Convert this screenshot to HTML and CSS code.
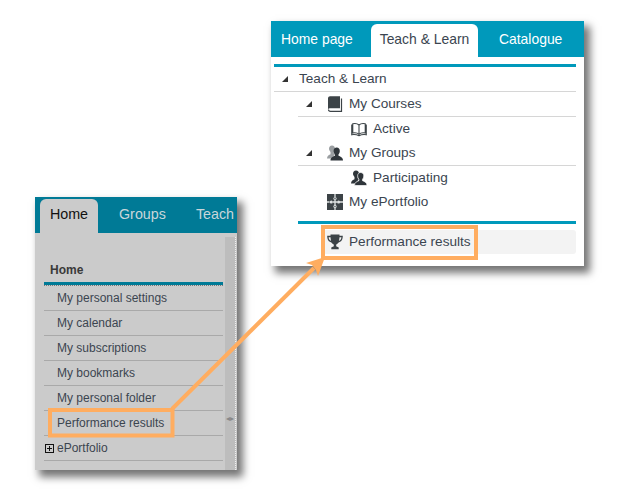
FILE: index.html
```html
<!DOCTYPE html>
<html lang="en">
<head>
<meta charset="utf-8">
<title>Performance results</title>
<link rel="stylesheet" href="styles.css">
</head>
<body>
<svg width="0" height="0" class="defs">
  <defs>
    <symbol id="people" viewBox="0 0 16 15">
      <path d="M5 0c2 0 3 1.500 3 3.300 0 1.400-.6 2.500-1.200 3.200v1.200L8 8.500 5 13H0c0-2.600 2.300-3.600 3.500-4.200V6.500C2.900 5.800 2 4.700 2 3.300 2 1.500 3 0 5 0z" fill="#9a9ea1"/>
      <path d="M9.700 2c2 0 3.100 1.500 3.100 3.400 0 1.500-.6 2.700-1.300 3.400v1.400c1.600.8 4.500 1.300 4.500 4.800H3.500c0-3.500 2.800-4 4.400-4.800V8.800c-.7-.7-1.300-1.900-1.300-3.400C6.600 3.500 7.700 2 9.700 2z" fill="#2f353a"/>
    </symbol>
    <symbol id="people-dark" viewBox="0 0 16 15">
      <path d="M5 0c2 0 3 1.500 3 3.300 0 1.400-.6 2.500-1.200 3.200v1.200L8 8.500 5 13H0c0-2.600 2.300-3.600 3.500-4.200V6.500C2.900 5.800 2 4.700 2 3.300 2 1.500 3 0 5 0z" fill="#2f353a"/>
      <path d="M9.700 2c2 0 3.100 1.500 3.100 3.400 0 1.500-.6 2.700-1.300 3.400v1.400c1.600.8 4.500 1.300 4.500 4.800H3.500c0-3.500 2.800-4 4.400-4.800V8.800c-.7-.7-1.300-1.900-1.300-3.400C6.600 3.500 7.700 2 9.700 2z" fill="#2f353a" stroke="#fff" stroke-width=".7"/>
    </symbol>
  </defs>
</svg>

<section class="window window-small">
  <nav class="tabs tabs-small">
    <span class="tab tab-active">Home</span>
    <span class="tab">Groups</span>
    <span class="tab">Teach</span>
  </nav>
  <div class="small-body">
    <div class="small-menu">
      <h2 class="small-title">Home</h2>
      <ul class="small-list">
        <li class="small-row">My personal settings</li>
        <li class="small-row">My calendar</li>
        <li class="small-row">My subscriptions</li>
        <li class="small-row">My bookmarks</li>
        <li class="small-row">My personal folder</li>
        <li class="small-row">Performance results</li>
        <li class="small-row small-row-tree"><span class="plus"></span>ePortfolio</li>
      </ul>
    </div>
    <div class="splitter"><span class="grip">◂▸</span></div>
  </div>
</section>

<section class="window window-large">
  <nav class="tabs tabs-large">
    <span class="tab tab-first">Home page</span>
    <span class="tab tab-active">Teach &amp; Learn</span>
    <span class="tab">Catalogue</span>
  </nav>
  <div class="tree">
    <div class="tree-row tree-root ruled"><span class="caret"></span><span>Teach &amp; Learn</span></div>
    <div class="tree-row level-1 ruled">
      <span class="caret"></span>
      <svg class="icon" viewBox="0 0 16 16">
        <path d="M1 2.200C1 1 2 .2 3 .2h10v12H3.300c-1 0-1.500.2-2.300.8z" fill="#3c4347"/>
        <path d="M1.500 13.500c0 1 .8 1.800 2 1.800h11V2.500" fill="none" stroke="#3c4347" stroke-width="1.200"/>
      </svg>
      <span>My Courses</span>
    </div>
    <div class="tree-row level-2">
      <svg class="icon" viewBox="0 0 18 16"><path d="M9 3.500C7.500 2 4.500 1.500 2 2v10.500c2.500-.4 5.500 0 7 1.500 1.500-1.500 4.500-1.900 7-1.500V2c-2.500-.5-5.500 0-7 1.500zm0 0V14M2 3.500H.8v11c3-.5 6 0 8.200 1 2.200-1 5.200-1.500 8.200-1v-11H16" fill="none" stroke="#3c4347" stroke-width="1.200"/></svg>
      <span>Active</span>
    </div>
    <div class="tree-row level-1 ruled">
      <span class="caret"></span>
      <svg class="icon"><use href="#people"/></svg>
      <span>My Groups</span>
    </div>
    <div class="tree-row level-2">
      <svg class="icon"><use href="#people-dark"/></svg>
      <span>Participating</span>
    </div>
    <div class="tree-row level-1">
      <span class="caret caret-none"></span>
      <svg class="icon" viewBox="0 0 16 16">
        <rect width="16" height="16" fill="#3c4347"/>
        <path d="M8 0v3M8 6v5M8 14v2M0 8h2.500M6 8h4M13 8h3" fill="none" stroke="#dfe3e4" stroke-width="1.300"/>
        <circle cx="8" cy="4.500" r="1.600" fill="#dfe3e4"/>
        <circle cx="4.300" cy="8" r="1.600" fill="#dfe3e4"/>
        <circle cx="11.600" cy="8" r="1.600" fill="#dfe3e4"/>
        <circle cx="8" cy="12.400" r="1.600" fill="#dfe3e4"/>
        <circle cx="8" cy="4.500" r=".7" fill="#3c4347"/>
        <circle cx="8" cy="12.400" r=".7" fill="#3c4347"/>
      </svg>
      <span>My ePortfolio</span>
    </div>
    <div class="tree-divider"></div>
    <div class="tree-row tree-current">
      <svg class="icon" viewBox="0 0 16 16"><path d="M3.500.5h9v1.300h3.300c0 3.300-1 6-4.200 6.700-.8 1.100-1.700 1.700-2.400 2V12c0 .8 1.600.9 2.500 1.500v1.700H4.300v-1.700c.9-.6 2.500-.7 2.500-1.500v-1.500c-.7-.3-1.600-.9-2.400-2C1.200 7.800.2 5.100.2 1.800h3.300zM1.600 3.200c.1 1.700.8 3 2.500 3.700-.3-1.100-.5-2.400-.6-3.700zm12.800 0h-1.900c-.1 1.300-.3 2.600-.6 3.700 1.700-.7 2.400-2 2.500-3.700z" fill="#3c4347" fill-rule="evenodd"/></svg>
      <span>Performance results</span>
    </div>
  </div>
</section>

<svg class="callout" viewBox="0 0 623 503" width="623" height="503">
  <path class="callout-box" d="M50 410h122.500v25.500H50zM323 227h153v31H323z"/>
  <path class="callout-line" d="M172 409 314 268"/>
  <path class="callout-head" d="M325 257 306 263 312 265 316 270 318 276z"/>
</svg>
</body>
</html>
```

FILE: styles.css
```css
html, body {
  margin: 0;
  padding: 0;
}

body {
  position: relative;
  width: 623px;
  height: 503px;
  overflow: hidden;
  background: #fff;
  font-family: "Liberation Sans", Arial, sans-serif;
  color: #3b4550;
}

.defs {
  position: absolute;
}

.window {
  position: absolute;
  box-sizing: border-box;
  display: flex;
  flex-direction: column;
}

.window-small {
  left: 35px;
  top: 197px;
  width: 202px;
  height: 273px;
  background: #cbcbcb;
  box-shadow: 5px 6px 8px 1px rgba(0, 0, 0, 0.55);
  overflow: hidden;
}

.window-large {
  left: 271px;
  top: 21px;
  width: 313px;
  height: 245px;
  background: #fff;
  box-shadow: 5px 6px 8px 1px rgba(0, 0, 0, 0.55);
}

.tabs {
  display: flex;
  flex: none;
  box-sizing: border-box;
  height: 36px;
  white-space: nowrap;
  color: #fff;
}

.tabs-large {
  background: #0099bb;
  padding: 3px 0 0;
  font-size: 13.900px;
}

.tabs-small {
  background: #007a96;
  padding: 2px 0 0 5px;
  font-size: 14.300px;
  color: #c8d6da;
  overflow: hidden;
}

.tab {
  flex: none;
  display: flex;
  align-items: center;
  box-sizing: border-box;
  padding: 0 10px 4px;
  margin-right: 10px;
  border-radius: 6px 6px 0 0;
}

.tabs-large .tab-first {
  width: 100px;
  margin-right: 0;
}

.tabs-large .tab-active {
  background: #fff;
  color: #3b4550;
  width: 107px;
  padding: 0 0 3px;
  justify-content: center;
  margin-right: 11px;
}

.tabs-small .tab-active {
  background: #cbcbcb;
  color: #111;
  width: 58px;
  justify-content: center;
  padding: 0 0 5px;
  margin-right: 11px;
}

.small-body {
  flex: 1;
  display: flex;
  padding: 0 0 0 9px;
  min-height: 0;
}

.small-menu {
  width: 179px;
  flex: none;
}

.small-title {
  margin: 0;
  box-sizing: border-box;
  height: 52px;
  padding-top: 30px;
  padding-left: 6px;
  font-size: 12px;
  line-height: 14px;
  font-weight: bold;
  color: #3a3a3a;
  border-bottom: 3px solid #007a96;
}

.small-list {
  list-style: none;
  margin: 0;
  padding: 0;
  border-top: 1px dotted #777;
}

.small-row {
  box-sizing: border-box;
  height: 25px;
  padding: 0 0 0 13px;
  font-size: 12px;
  line-height: 24px;
  color: #3b4550;
  border-bottom: 1px solid #a9a9a9;
  white-space: nowrap;
}

.small-row-tree {
  display: flex;
  align-items: center;
}

.plus {
  box-sizing: border-box;
  flex: none;
  width: 9px;
  height: 9px;
  margin-left: -12px;
  margin-right: 3px;
  border: 1px solid #111;
  background:
    linear-gradient(#111, #111) center / 5px 1px no-repeat,
    linear-gradient(#111, #111) center / 1px 5px no-repeat;
}

.splitter {
  flex: none;
  width: 10px;
  margin: 4px 0 0 2px;
  padding-top: 178px;
  box-sizing: content-box;
  height: 55px;
  background: #bdbdbd;
  border-right: 1px dotted #f0f0f0;
  display: flex;
  align-items: flex-start;
  justify-content: center;
}

.grip {
  font-size: 8px;
  line-height: 8px;
  color: #888;
}

.tree {
  padding: 7px 8px 0 3px;
  font-size: 13.600px;
}

.tree-row {
  box-sizing: border-box;
  display: flex;
  align-items: center;
  height: 24px;
  padding-bottom: 2px;
}

.ruled {
  height: 25px;
  border-bottom: 1px solid #d6d6d6;
}

.tree-root {
  height: 28px;
  border-top: 3px solid #0099bb;
  padding-left: 8px;
  gap: 6px;
}

.tree-root .caret {
  margin-right: 5px;
}

.level-1 {
  margin-left: 24px;
  padding-left: 8px;
  gap: 6px;
}

.level-2 {
  margin-left: 24px;
  padding-left: 53px;
  gap: 6px;
}

.caret {
  width: 0;
  height: 0;
  flex: none;
  border-style: solid;
  border-width: 0 0 6px 6px;
  border-color: transparent transparent #333 transparent;
  margin-top: 2px;
  margin-right: 9px;
}

.caret-none {
  border-color: transparent;
}

.icon {
  width: 16px;
  height: 16px;
  flex: none;
  margin-top: 2px;
}

.tree-divider {
  margin: 7px 0 6px 24px;
  height: 3px;
  background: #0099bb;
}

.tree-current {
  margin-left: 49px;
  padding-left: 4px;
  gap: 6px;
  background: #f3f3f3;
  border-radius: 3px;
}

.callout {
  position: absolute;
  left: 0;
  top: 0;
  pointer-events: none;
}

.callout-box,
.callout-line {
  fill: none;
  stroke: #ffad60;
  stroke-width: 4;
}

.callout-head {
  fill: #ffad60;
}
```
